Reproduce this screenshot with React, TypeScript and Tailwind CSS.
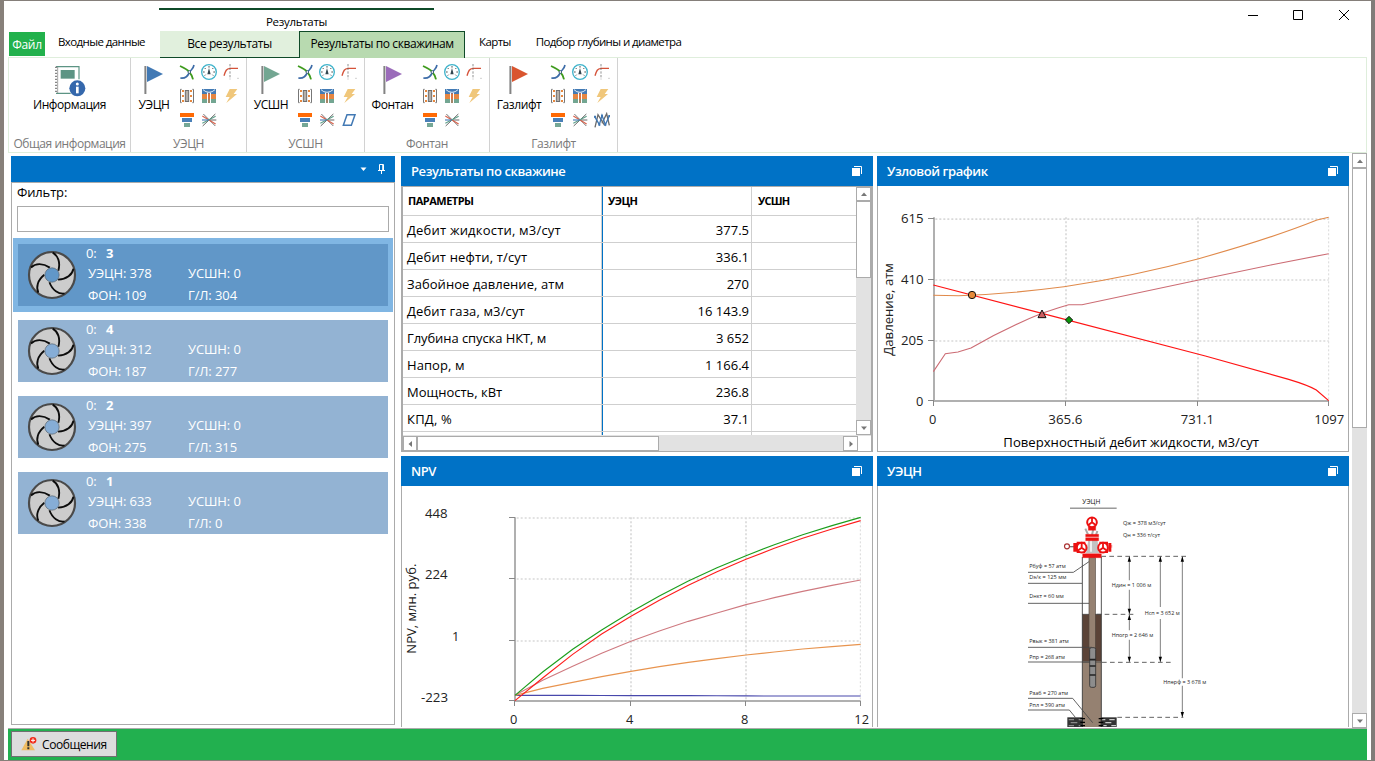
import React from "react";

const FONT = '"Open Sans", "Noto Sans", sans-serif';

/* ---------- Ribbon icons (48-unit grid) ---------- */

function Ico({ children }: { children: React.ReactNode }) {
  return (
    <svg viewBox="0 0 48 48" className="h-4 w-4" fill="none">
      {children}
    </svg>
  );
}

const NodalIcon = () => (
  <Ico>
    <path d="M3 6 C12 10 24 15 30 23 C36 30 40 36 42 46" stroke="#3f9b1e" strokeWidth="5.5" />
    <path d="M45 3 C42 18 36 16 31 25 C26 38 18 44 4 42" stroke="#3d6ca8" strokeWidth="5" />
    <circle cx="31" cy="24" r="4" fill="#fff" stroke="#33546f" strokeWidth="2.5" />
  </Ico>
);

const GaugeIcon = () => (
  <Ico>
    <circle cx="24" cy="24" r="22" stroke="#3fb3cb" strokeWidth="4" />
    <path d="M6 24h5M37 24h5M24 6v5M11 12l3 3M37 12l-3 3M11 35l3-3M37 35l-3-3" stroke="#555" strokeWidth="3" />
    <path d="M24 12 L19 31 h10 Z" fill="#33464f" />
  </Ico>
);

const IprIcon = () => (
  <Ico>
    <path d="M3 35 C8 20 10 14 21 13 H45" stroke="#d5533a" strokeWidth="4" />
    <path d="M21 0v46" stroke="#6a6a6a" strokeWidth="2.2" strokeDasharray="7 4" />
    <path d="M43 43h4" stroke="#999" strokeWidth="2" />
  </Ico>
);

const PumpIcon = () => (
  <Ico>
    <path d="M8 4H4.500v40H8M40 4h3.500v40H40" stroke="#777" strokeWidth="3" />
    <path d="M9 9h6M9 24h6M9 39h6M33 9h6M33 24h6M33 39h6" stroke="#e6883f" strokeWidth="5.500" />
    <rect x="19" y="7.500" width="10" height="33" fill="#b5b0aa" stroke="#6f6f6f" strokeWidth="3" />
  </Ico>
);

const LayersIcon = () => (
  <Ico>
    <path d="M3 3H45V18H3Z" fill="#437bb5" />
    <path d="M3 18H45V33H3Z" fill="#e58642" />
    <path d="M3 33H45V45H3Z" fill="#73a692" />
    <path d="M6 5Q14 13 24 13Q34 13 42 5" stroke="#fff" strokeWidth="2.5" />
    <path d="M19.500 14V45M28.500 14V45" stroke="#fff" strokeWidth="3" />
    <path d="M24 15V45" stroke="#d8643c" strokeWidth="3" />
  </Ico>
);

const BoltIcon = () => (
  <Ico>
    <path d="M20 3H43L32 18H42L10 45L20 27H8Z" fill="#f0c77b" />
  </Ico>
);

const FunnelIcon = () => (
  <Ico>
    <path d="M3 3H45V15H3Z" fill="#ff6a05" />
    <path d="M9 18H39V30H9Z" fill="#4a80b8" />
    <path d="M15 33H33V45H15Z" fill="#75a796" />
  </Ico>
);

const SpiderIcon = () => (
  <Ico>
    <path d="M5 42L43 6M24 24H46" stroke="#666" strokeWidth="3" />
    <path d="M7 6L43 42" stroke="#777" strokeWidth="3" />
    <path d="M4 12L44 36" stroke="#d9624c" strokeWidth="3.500" />
    <path d="M4 34L44 13" stroke="#5fa08b" strokeWidth="3.500" />
    <path d="M3 24H24" stroke="#4a80b8" strokeWidth="3.500" />
  </Ico>
);

const SkewIcon = () => (
  <Ico>
    <path d="M18 8H42L31 40H7Z" stroke="#4279b4" strokeWidth="4.500" />
  </Ico>
);

const ZigzagIcon = () => (
  <Ico>
    <path d="M3 46L12 8L32 40" stroke="#6b6b6b" strokeWidth="4" />
    <path d="M24 34L38 5L46 40" stroke="#6b6b6b" strokeWidth="4" />
    <path d="M2 14L16 38L24 10L34 38L46 12" stroke="#3f77b3" strokeWidth="4" />
    <path d="M0 11h6v6h-6zM13 35h6v6h-6zM21 8h6v6h-6zM31 35h6v6h-6zM43 9h5v6h-5z" fill="#3f77b3" />
  </Ico>
);

function FlagIcon({ color }: { color: string }) {
  return (
    <svg viewBox="0 0 20 30" className="h-[30px] w-5">
      <rect x="0.4" y="1" width="2" height="28" fill="#838383" />
      <path d="M3 1L19 9L3 17Z" fill={color} />
    </svg>
  );
}

function InfoIcon() {
  return (
    <svg viewBox="0 0 96 96" className="h-8 w-8" fill="none">
      <path d="M6 5H75V43M6 85H50" stroke="#5c9484" strokeWidth="3.5" />
      <path d="M6 5V85" stroke="#888" strokeWidth="6" strokeDasharray="4 5" />
      <path d="M11 5V85" stroke="#777" strokeWidth="2" />
      <path d="M20 15H62V41H20Z" fill="#5c9484" />
      <circle cx="70" cy="70" r="24" fill="#3568ac" />
      <path d="M66 65H74V85H66Z" fill="#fff" />
      <circle cx="70" cy="57" r="4.5" fill="#fff" />
    </svg>
  );
}

/* ---------- Ribbon ---------- */

type Group = {
  name: string;
  color: string;
  width: string;
  flagWidth: string;
  extra?: React.ReactNode;
};

const groups: Group[] = [
  { name: "УЭЦН", color: "#4279b4", width: "w-[116px]", flagWidth: "w-[46px]" },
  { name: "УСШН", color: "#73a692", width: "w-[118px]", flagWidth: "w-[48px]", extra: <SkewIcon /> },
  { name: "Фонтан", color: "#9b6cba", width: "w-[125px]", flagWidth: "w-[55px]" },
  { name: "Газлифт", color: "#d9552f", width: "w-[128px]", flagWidth: "w-[58px]", extra: <ZigzagIcon /> },
];

function RibbonGroup({ g }: { g: Group }) {
  return (
    <div className={`flex flex-col border-r border-[#d2d2d2] ${g.width}`}>
      <div className="flex h-[76px] shrink-0 pt-[2px]">
        <div className={`flex flex-col items-center pt-[5px] ${g.flagWidth}`}>
          <FlagIcon color={g.color} />
          <span className="mt-[2px] whitespace-nowrap text-[12px] leading-[15px] tracking-[-0.4px] text-black">
            {g.name}
          </span>
        </div>
        <div className="grid h-[72px] w-[66px] -translate-x-px grid-cols-3 place-items-center">
          <NodalIcon />
          <GaugeIcon />
          <IprIcon />
          <PumpIcon />
          <LayersIcon />
          <BoltIcon />
          <FunnelIcon />
          <SpiderIcon />
          {g.extra}
        </div>
      </div>
      <div className="h-[18px] text-center text-[12px] leading-[20px] tracking-[-0.4px] text-[#7a7a7a]">{g.name}</div>
    </div>
  );
}

function Header() {
  return (
    <header className="flex h-14 shrink-0 justify-between pl-[5px]">
      <div className="flex">
        <div className="mt-[31px] flex h-6 w-9 items-center justify-center bg-[#22b14c] pt-px text-[12px] tracking-[-0.3px] text-white">
          Файл
        </div>
        <div className="mt-[32px] w-[114px] pl-[13px] text-[11.5px] leading-[18px] tracking-[-0.6px] text-black">
          Входные данные
        </div>
        <div className="flex w-[306px] flex-col pt-[7px]">
          <div className="h-[2px] w-[275px] shrink-0 bg-[#0f4a28]" />
          <div className="h-[21px] w-[275px] shrink-0 text-center text-[11.5px] leading-[23px] tracking-[-0.3px] text-black">
            Результаты
          </div>
          <div className="relative ml-px flex h-[27px] shrink-0 text-[12px] tracking-[-0.42px] text-black">
            <div className="w-[139px] border-b border-[#0f4a28] bg-[#e1f0dd] text-center leading-[25px]">
              Все результаты
            </div>
            <div className="w-[166px] border-x border-t border-[#0f4a28] bg-[#b8dab0] text-center leading-[24px]">
              Результаты по скважинам
            </div>
          </div>
        </div>
        <div className="mt-[32px] pl-[14px] text-[11.5px] leading-[18px] tracking-[-0.6px] text-black">Карты</div>
        <div className="mt-[32px] pl-[25px] text-[11.5px] leading-[18px] tracking-[-0.6px] text-black">
          Подбор глубины и диаметра
        </div>
      </div>
      <svg viewBox="0 0 104 14" className="mr-[20px] mt-[7px] h-[14px] w-[104px]" fill="none" stroke="#000">
        <path d="M1 7.5H11" />
        <path d="M46.5 2.5H55.5V11.5H46.5Z" />
        <path d="M92 2L102 12M102 2L92 12" />
      </svg>
    </header>
  );
}

function Ribbon() {
  return (
    <div className="mx-1 flex h-24 shrink-0 border border-[#dfeedc]">
      <div className="flex w-[122px] flex-col border-r border-[#d2d2d2]">
        <div className="flex h-[76px] shrink-0 flex-col items-center pt-[7px]">
          <InfoIcon />
          <span className="text-[12px] leading-[15px] tracking-[-0.4px] text-black">Информация</span>
        </div>
        <div className="h-[18px] whitespace-nowrap text-center text-[12px] leading-[20px] tracking-[-0.45px] text-[#7a7a7a]">
          Общая информация
        </div>
      </div>
      {groups.map((g) => (
        <RibbonGroup key={g.name} g={g} />
      ))}
    </div>
  );
}

/* ---------- Left list ---------- */

const wells = [
  { n: 3, a: 378, b: 0, c: 109, d: 304, selected: true },
  { n: 4, a: 312, b: 0, c: 187, d: 277, selected: false },
  { n: 2, a: 397, b: 0, c: 275, d: 315, selected: false },
  { n: 1, a: 633, b: 0, c: 338, d: 0, selected: false },
];

function Impeller({ hub }: { hub: string }) {
  return (
    <svg viewBox="-75 -75 150 150" className="h-[50px] w-[50px]" fill="none">
      <circle r="69" fill="#cccccc" stroke="#4a4a4a" strokeWidth="6.500" />
      {[0, 72, 144, 216, 288].map((a) => (
        <path key={a} transform={`rotate(${a})`} d="M2 -67 C18 -58 26 -38 19 -13" stroke="#0c0c0c" strokeWidth="5.500" />
      ))}
      <circle r="21.500" fill={hub} stroke="#55606b" strokeWidth="2" />
    </svg>
  );
}

function WellsPanel() {
  return (
    <section className="flex h-[569px] w-[384px] flex-col">
      <div className="flex h-[26px] items-center justify-end gap-[10px] bg-[#0072c6] pr-[9px]">
        <svg viewBox="0 0 7 5" className="h-[5px] w-[7px]">
          <path d="M0.5 0.5H6.5L3.5 4Z" fill="#fff" />
        </svg>
        <svg viewBox="0 0 9 10" className="h-[10px] w-[9px]" fill="none" stroke="#fff">
          <path d="M2.5 6V0.5H6.5V6M1 6.5H8M4.5 6.5V10M5.7 1V6" />
        </svg>
      </div>
      <div className="flex flex-1 flex-col border border-[#ababab] px-px">
        <div className="h-[23px] pl-1 text-[13px] leading-[18px] tracking-[-0.15px] text-black">Фильтр:</div>
        <div className="mx-1 mb-[6px] h-[26px] border border-[#ababab]" />
        {wells.map((w) => (
          <div key={w.n} className={`mb-[2px] h-[74px] px-[5px] py-[6px] ${w.selected ? "bg-[#80b6e3]" : ""}`}>
            <div className={`flex h-[62px] text-white ${w.selected ? "bg-[#6197c8]" : "bg-[#93b3d3]"}`}>
              <div className="flex w-[68px] items-center pl-[9px]">
                <Impeller hub={w.selected ? "#6197c8" : "#86add6"} />
              </div>
              <div className="text-[13px] font-medium leading-[22px] tracking-[-0.1px]">
                <div className="flex h-[18px] leading-[18px]">
                  <span className="w-5">0:</span>
                  <b>{w.n}</b>
                </div>
                <div className="flex pl-[2px]">
                  <span className="w-[100px]">УЭЦН: {w.a}</span>
                  <span>УСШН: {w.b}</span>
                </div>
                <div className="flex pl-[2px]">
                  <span className="w-[100px]">ФОН: {w.c}</span>
                  <span>Г/Л: {w.d}</span>
                </div>
              </div>
            </div>
          </div>
        ))}
      </div>
    </section>
  );
}

/* ---------- Panels ---------- */

function Panel({ title, children }: { title: string; children: React.ReactNode }) {
  return (
    <section className="flex w-[472px] flex-col overflow-hidden">
      <div className="flex h-[30px] shrink-0 items-center justify-between bg-[#0072c6] pl-[10px] pr-[11px]">
        <span className="text-[13px] font-semibold leading-[18px] tracking-[-0.42px] text-white">{title}</span>
        <svg viewBox="0 0 10 10" className="h-[10px] w-[10px]">
          <path d="M2 0.5H9.5V8" fill="none" stroke="#fff" />
          <path d="M0 2H8V10H0Z" fill="#fff" />
        </svg>
      </div>
      {children}
    </section>
  );
}

function Arrow({ dir, className }: { dir: "up" | "down" | "left" | "right"; className: string }) {
  const d = {
    up: "M4 9L7 5.5L10 9Z",
    down: "M4 5.5L7 9L10 5.5Z",
    left: "M9 4L5.5 7L9 10Z",
    right: "M5.5 4L9 7L5.5 10Z",
  }[dir];
  return (
    <div className={`flex shrink-0 items-center justify-center border border-[#ababab] bg-white ${className}`}>
      <svg viewBox="0 0 14 14" className="h-[14px] w-[14px] shrink-0">
        <path d={d} fill="#777" />
      </svg>
    </div>
  );
}

const rows: [string, string, string][] = [
  ["Дебит жидкости, м3/сут", "377.5", "tracking-[0.2px]"],
  ["Дебит нефти, т/сут", "336.1", "tracking-[0.16px]"],
  ["Забойное давление, атм", "270", "tracking-[0.06px]"],
  ["Дебит газа, м3/сут", "16 143.9", "tracking-[0.14px]"],
  ["Глубина спуска НКТ, м", "3 652", "tracking-[-0.08px]"],
  ["Напор, м", "1 166.4", "tracking-[0.08px]"],
  ["Мощность, кВт", "236.8", "tracking-[0px]"],
  ["КПД, %", "37.1", "tracking-[0.2px]"],
];

function ResultsTable() {
  return (
    <div className="flex h-[266px] flex-col border-x-2 border-y border-[#ababab]">
      <div className="flex h-[248px]">
        <div className="h-[248px] w-[453px] overflow-hidden">
          <div className="flex h-[29px] border-b border-[#cfcfcf] text-[11px] font-bold leading-[28px] text-black">
            <div className="w-[199px] border-r border-[#cfcfcf] pl-[5px] tracking-[-0.5px]">ПАРАМЕТРЫ</div>
            <div className="w-[150px] border-l border-r border-l-[#0072c6] border-r-[#cfcfcf] pl-[5px] tracking-[-0.55px]">
              УЭЦН
            </div>
            <div className="pl-[6px] tracking-[-0.8px]">УСШН</div>
          </div>
          {rows.map(([k, v, tracking]) => (
            <div key={k} className="flex h-[27px] border-b border-[#cfcfcf] text-[13px] leading-[29px] text-black">
              <div className={`w-[199px] border-r border-[#cfcfcf] pl-1 ${tracking}`}>{k}</div>
              <div className="w-[150px] border-l border-r border-l-[#0072c6] border-r-[#cfcfcf] pr-[2px] text-right">
                {v}
              </div>
            </div>
          ))}
          <div className="flex h-1">
            <div className="w-[199px] border-r border-[#cfcfcf]" />
            <div className="w-[150px] border-l border-r border-l-[#0072c6] border-r-[#cfcfcf]" />
          </div>
        </div>
        <div className="flex w-[15px] flex-col bg-[#e2e2e2]">
          <Arrow dir="up" className="h-[14px] w-[15px]" />
          <div className="h-[77px] border border-[#ababab] bg-white" />
          <div className="flex-1" />
          <Arrow dir="down" className="h-[15px] w-[15px]" />
        </div>
      </div>
      <div className="flex h-[16px] bg-[#e2e2e2] pt-px">
        <Arrow dir="left" className="h-[15px] w-[14px]" />
        <div className="w-[242px] border border-[#ababab] bg-white" />
        <div className="flex-1" />
        <Arrow dir="right" className="h-[15px] w-[15px]" />
        <div className="w-[13px] bg-white" />
      </div>
    </div>
  );
}

/* ---------- SVG text with fixed extent ---------- */

function Label({
  x,
  y,
  w,
  size = 39,
  fill = "#222",
  children,
}: {
  x: number;
  y: number;
  w?: number;
  size?: number;
  fill?: string;
  children: string;
}) {
  return (
    <text x={x} y={y} textLength={w} lengthAdjust="spacingAndGlyphs" fontSize={size} fill={fill}>
      {children}
    </text>
  );
}

/* ---------- Charts (three units per pixel) ---------- */

function NodalChart() {
  return (
    <div className="h-[266px] border border-t-0 border-[#ababab]">
      <svg viewBox="18 108 1410 795" className="h-[265px] w-[470px]" fill="none" style={{ fontFamily: FONT }}>
        <g stroke="#d9d9d9" strokeWidth="5" strokeDasharray="6 6">
          <path d="M190 207.5H1370M190 390H1370M190 573H1370M582 202V750M978 202V750" />
          <path d="M1370 202V750" strokeWidth="3" />
        </g>
        <path d="M186 202V753M184 753H1370" stroke="#b0b0b0" strokeWidth="6" />
        <path
          d="M168 205.5H186M168 388.5H186M168 571.5H186M168 751.5H186M184.500 753V768M580.500 753V768M976.500 753V768M1369.500 753V768"
          stroke="#888"
          strokeWidth="3"
        />
        <path
          d="M184 436L260 437C420 432 500 420 585 409C720 388 850 361 980 326C1110 290 1230 252 1335 210L1370 202"
          stroke="#e08a4b"
          strokeWidth="3.2"
        />
        <path
          d="M184 665L220 611L258 606L297 594C370 552 440 518 510 490L560 473L590 464H630L980 390L1200 344L1370 311"
          stroke="#cc6c74"
          strokeWidth="3.2"
        />
        <path d="M184 405L510 490L1000 618L1250 688Q1310 706 1333 720L1370 752" stroke="#ff1414" strokeWidth="3.6" />
        <circle cx="300" cy="435" r="11" fill="#e58a3a" stroke="#111" strokeWidth="3" />
        <path d="M510 480L522 503H498Z" fill="#cf5f62" stroke="#111" strokeWidth="3" />
        <path d="M591 499L602 510L591 521L580 510Z" fill="#0a960a" stroke="#111" strokeWidth="3" />
        <Label x={87} y={219} w={68}>615</Label>
        <Label x={87} y={402} w={68}>410</Label>
        <Label x={87} y={585} w={68}>205</Label>
        <Label x={132} y={768} w={22}>0</Label>
        <Label x={171} y={822} w={22}>0</Label>
        <Label x={529} y={822} w={102}>365.6</Label>
        <Label x={926} y={822} w={100}>731.1</Label>
        <Label x={1327} y={822} w={90}>1097</Label>
        <Label x={394} y={892} w={767} fill="#000">Поверхностный дебит жидкости, м3/сут</Label>
        <g transform="rotate(-90 62 617)">
          <Label x={62} y={617} w={278}>Давление, атм</Label>
        </g>
      </svg>
    </div>
  );
}

const years = [357, 440, 530, 617, 705, 790, 877, 963, 1050, 1135, 1220, 1308, 1394];

const npvSeries = [
  { color: "#4848ac", values: [736, 736, 736.3, 736.6, 737, 737, 737, 737.3, 737.6, 738, 738, 738, 738] },
  { color: "#e8944f", values: [736, 715, 697, 680, 664, 650, 637, 626, 615, 606, 597, 590, 583] },
  { color: "#cf7a80", values: [736, 691, 649, 610, 574, 543, 514, 489, 464, 443, 424, 406, 390] },
  { color: "#ff1c1c", values: [752, 684, 613, 552, 499, 451, 406, 365, 328, 295, 265, 237, 212] },
  { color: "#1c9e1c", values: [736, 666, 598, 540, 486, 438, 393, 353, 317, 284, 254, 227, 202] },
];

function NpvChart() {
  return (
    <div className="h-[242px] border-x border-[#ababab]">
      <svg viewBox="18 108 1410 726" className="h-[242px] w-[470px]" fill="none" style={{ fontFamily: FONT }}>
        <g stroke="#d9d9d9" strokeWidth="5" strokeDasharray="6 6">
          <path d="M362 204H1394M362 387H1394M362 573H1394M705 202V750M1050 202V750" />
          <path d="M1393 202V750" strokeWidth="3" />
        </g>
        <path d="M357 202V753M355 753H1394" stroke="#b0b0b0" strokeWidth="6" />
        <path
          d="M339 202.500H357M339 385.500H357M339 571.500H357M339 751.500H357M355.500 753V768M703.500 753V768M1048.500 753V768M1393.500 753V768"
          stroke="#888"
          strokeWidth="3"
        />
        {npvSeries.map((s) => (
          <polyline
            key={s.color}
            points={s.values.map((v, i) => `${years[i]},${v}`).join(" ")}
            stroke={s.color}
            strokeWidth="3.4"
          />
        ))}
        <Label x={87} y={204} w={68}>448</Label>
        <Label x={87} y={387} w={68}>224</Label>
        <Label x={168} y={573} w={22}>1</Label>
        <Label x={75} y={756} w={81}>-223</Label>
        <Label x={342} y={822} w={22}>0</Label>
        <Label x={690} y={822} w={22}>4</Label>
        <Label x={1035} y={822} w={22}>8</Label>
        <Label x={1375} y={822} w={44}>12</Label>
        <g transform="rotate(-90 61 611)">
          <Label x={61} y={611} w={270}>NPV, млн. руб.</Label>
        </g>
      </svg>
    </div>
  );
}

function Wheel({ x, y }: { x: number; y: number }) {
  return (
    <g transform={`translate(${x} ${y})`} stroke="#ec1111">
      <circle r="14.500" fill="#fff" strokeWidth="6" />
      <path d="M0 0L0 -14M0 0L-12 9M0 0L12 9" strokeWidth="5.500" />
    </g>
  );
}

function Dim({ x, y1, y2 }: { x: number; y1: number; y2: number }) {
  return (
    <g>
      <path d={`M${x} ${y1}V${y2}`} stroke="#666" strokeWidth="2.500" />
      <path d={`M${x} ${y1}l-5 16h10ZM${x} ${y2}l-5 -16h10Z`} fill="#000" />
    </g>
  );
}

function WellScheme() {
  return (
    <div className="h-[242px] border-x border-[#ababab]">
      <svg viewBox="-396 3 1410 726" className="h-[242px] w-[470px]" fill="none" style={{ fontFamily: FONT }}>
        <Label x={217} y={56} w={54} size={20} fill="#111">УЭЦН</Label>
        <path d="M180 69.500H320" stroke="#666" strokeWidth="3" />

        {/* Casing, annulus fluid and tubing */}
        <rect x="217" y="388" width="57" height="142" fill="#5b4337" />
        <rect x="217" y="530" width="57" height="196" fill="#958171" />
        <rect x="237" y="218" width="19" height="272" fill="#958171" stroke="#554940" strokeWidth="2" />
        <path d="M217 216V726M274 216V726" stroke="#333" strokeWidth="2.500" />
        <path d="M217 388H237M256 388H274M217 531H274" stroke="#333" strokeWidth="2" />

        {/* Downhole pump */}
        <rect x="239" y="488" width="18" height="119" rx="5" fill="#8d8d8d" stroke="#333" strokeWidth="2.500" />
        <path d="M239 524H257M239 543H257M239 570H257" stroke="#222" strokeWidth="5" />

        {/* Perforated layer */}
        <rect x="172" y="697" width="47" height="29" fill="#333" />
        <rect x="272" y="697" width="48" height="29" fill="#333" />
        <path d="M176 704H192M206 704H216M182 713H202M176 722H192M206 722H216" stroke="#8a8a8a" strokeWidth="4" />
        <path d="M276 704H286M298 704H314M286 713H304M276 722H290M304 722H318" stroke="#c9c9c9" strokeWidth="4" />
        <path d="M211 701H225M211 712H225M211 722H225M266 701H280M266 712H280M266 722H280" stroke="#000" strokeWidth="4" />

        {/* Wellhead */}
        <path d="M236 160H262L267 205H228Z" fill="#c2c2c2" />
        <path d="M243 163V200" stroke="#eee" strokeWidth="6" />
        <path d="M226 131L234 148M250 132L246 150M262 138L258 150" stroke="#aaa" strokeWidth="6" />
        <path d="M178 185H195" stroke="#777" strokeWidth="4" />
        <path d="M190 174H201V200H190ZM295 174H304V200H295Z" fill="#ec1111" />
        <path d="M200 170H226V204H200ZM268 170H294V204H268Z" fill="#ec1111" />
        <path d="M227 148H266V155H227ZM227 158H266V167H227ZM218 206H274V218H218ZM235 126H257V136H235Z" fill="#ec1111" stroke="#ec1111" strokeWidth="1" />
        <Wheel x={246} y={112} />
        <Wheel x={215} y={188} />
        <Wheel x={279} y={188} />
        <circle cx="171" cy="184" r="7.500" fill="#fff" stroke="#a33" strokeWidth="3.500" />
        <path d="M305 180V188" stroke="#e66" strokeWidth="3" />

        {/* Callouts */}
        <g stroke="#444" strokeWidth="2.500">
          <path d="M54 262H190L237 230M54 295H216M54 355H237M54 487H246M54 531H240M54 640H188L248 713M54 675H178L196 697" />
          <path d="M274 214H532" strokeDasharray="14 10" />
          <path d="M260 388H376" strokeDasharray="14 10" />
          <path d="M276 532H482" strokeDasharray="14 10" />
          <path d="M322 697H520" strokeDasharray="14 10" />
        </g>
        <Dim x={358} y1={214} y2={387} />
        <Dim x={358} y1={389} y2={531} />
        <Dim x={451} y1={214} y2={531} />
        <Dim x={517} y1={214} y2={697} />
        <path d="M340 286H376V314H340ZM340 436H376V464H340ZM440 366H512V402H440ZM500 580H530V602H500Z" fill="#fff" />

        <Label x={339} y={120} w={128} size={18}>Qж = 378 м3/сут</Label>
        <Label x={339} y={156} w={111} size={18}>Qн = 336 т/сут</Label>
        <Label x={58} y={248} w={109} size={18}>Рбуф = 57 атм</Label>
        <Label x={58} y={282} w={111} size={18}>Dэ/к = 125 мм</Label>
        <Label x={58} y={339} w={103} size={18}>Dнкт = 60 мм</Label>
        <Label x={58} y={474} w={118} size={18}>Рвык = 381 атм</Label>
        <Label x={58} y={522} w={107} size={18}>Рпр = 268 атм</Label>
        <Label x={58} y={629} w={116} size={18}>Рзаб = 270 атм</Label>
        <Label x={58} y={665} w={107} size={18}>Рпл = 390 атм</Label>
        <Label x={305} y={306} w={119} size={18}>Ндин = 1 006 м</Label>
        <Label x={305} y={456} w={125} size={18}>Нпогр = 2 646 м</Label>
        <Label x={404} y={390} w={105} size={18}>Нсп = 3 652 м</Label>
        <Label x={460} y={597} w={129} size={18}>Нперф = 3 678 м</Label>
      </svg>
    </div>
  );
}

function StatusBar() {
  return (
    <footer className="mx-1 flex h-8 shrink-0 border-t border-[#ababab] bg-[#22b04f] pl-[3px] pt-[2px]">
      <div className="flex h-[26px] w-[106px] items-center border border-[#707070] bg-[#dddddd] pl-[9px]">
        <svg viewBox="0 0 48 42" className="h-[14px] w-4">
          <path d="M20 5L42 40H1Z" fill="#f0bd63" />
          <path d="M19 12H25V28H19ZM19 31H25V37H19Z" fill="#333" />
          <circle cx="36" cy="10" r="10" fill="#f02b18" />
          <path d="M30 10H42M36 4V16" stroke="#fff" strokeWidth="3" />
        </svg>
        <span className="ml-[5px] pt-[2px] text-[12px] tracking-[-0.42px] text-black">Сообщения</span>
      </div>
    </footer>
  );
}

export default function App() {
  return (
    <div
      className="flex h-[761px] w-[1375px] overflow-hidden border-b border-l-4 border-r-4 border-t border-b-[#857f78] border-l-[#87807a] border-r-[#807c79] border-t-[#857f7a] bg-white"
      style={{ fontFamily: FONT }}
    >
      <div className="flex w-full flex-col">
        <Header />
        <Ribbon />
        <main className="flex h-[575px] shrink-0 overflow-hidden pl-[7px]">
          <div className="pt-[3px]">
            <WellsPanel />
          </div>
          <div className="ml-[6px] mt-[3px] grid h-[571px] w-[948px] grid-cols-[472px_472px] grid-rows-[296px_271px] gap-1 overflow-hidden">
            <Panel title="Результаты по скважине">
              <ResultsTable />
            </Panel>
            <Panel title="Узловой график">
              <NodalChart />
            </Panel>
            <Panel title="NPV">
              <NpvChart />
            </Panel>
            <Panel title="УЭЦН">
              <WellScheme />
            </Panel>
          </div>
          <div className="ml-[3px] flex w-[15px] flex-col bg-[#e2e2e2]">
            <Arrow dir="up" className="h-[15px] w-[15px]" />
            <div className="h-[260px] border border-[#ababab] bg-white" />
            <div className="flex-1" />
            <Arrow dir="down" className="h-[15px] w-[15px]" />
          </div>
        </main>
        <StatusBar />
      </div>
    </div>
  );
}
